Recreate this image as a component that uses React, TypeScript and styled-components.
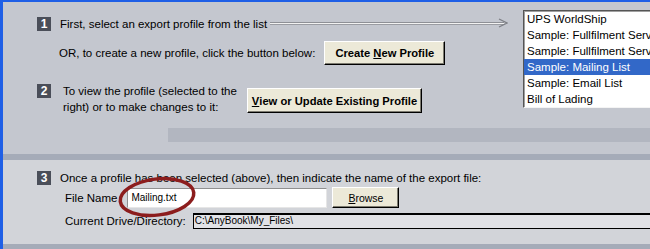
import React from "react";
import styled, { createGlobalStyle } from "styled-components";

const GlobalStyle = createGlobalStyle`
  html, body { margin: 0; padding: 0; background: #c4c7cf; }
  * { box-sizing: border-box; }
`;

const Frame = styled.div`
  width: 650px;
  height: 249px;
  display: flex;
  flex-direction: column;
  border-left: 3px solid #1f5fe6;
  border-top: 2px solid #1f5fe6;
  overflow: hidden;
  font-family: "Liberation Sans", Arial, sans-serif;
  font-size: 11.5px;
  color: #000;
`;

const TopPanel = styled.div`
  height: 152px;
  flex: none;
  display: flex;
  flex-direction: column;
  padding-top: 8px;
  background: #c4c7cf;
  overflow: hidden;
`;

const TopRow = styled.div`
  display: flex;
  align-items: flex-start;
`;

const LeftCol = styled.div`
  flex: 1;
  min-width: 0;
  display: flex;
  flex-direction: column;
  padding-left: 34px;
  padding-right: 15px;
`;

const Badge = styled.div`
  width: 14px;
  height: 14px;
  flex: none;
  background: #4a4e59;
  color: #fff;
  font-weight: bold;
  font-size: 12px;
  line-height: 14px;
  text-align: center;
`;

const StepRow = styled.div<{ $mt: number }>`
  display: flex;
  align-items: center;
  height: 14px;
  margin-top: ${(p) => p.$mt}px;
`;

const StepText = styled.span<{ $ml: number }>`
  margin-left: ${(p) => p.$ml}px;
  white-space: nowrap;
`;

const ArrowWrap = styled.div`
  flex: 1;
  display: flex;
  align-items: center;
  margin-left: 3px;
  margin-top: -2px;
`;

const ArrowLine = styled.div`
  flex: 1;
  height: 3px;
  border-top: 1px solid #8e9096;
  border-bottom: 1px solid #9a9ca2;
  background: #f2f2f2;
`;

const OrRow = styled.div`
  display: flex;
  align-items: center;
  gap: 9px;
  margin-top: 10px;
  padding-left: 22px;
  height: 24px;
`;

const WinButton = styled.div<{ $w: number; $h: number; $bold?: boolean }>`
  width: ${(p) => p.$w}px;
  height: ${(p) => p.$h}px;
  flex: none;
  display: flex;
  align-items: center;
  justify-content: center;
  background: #ece9d8;
  border: 1px solid;
  border-color: #ffffff #000000 #000000 #ffffff;
  box-shadow: inset -1px -1px 0 #7d7b70;
  font-weight: ${(p) => (p.$bold ? "bold" : "normal")};
  font-size: ${(p) => (p.$bold ? "11.2px" : "10.5px")};
  white-space: nowrap;
`;

const Step2Row = styled.div`
  display: flex;
  align-items: flex-start;
  margin-top: 19px;
`;

const Step2Text = styled.div`
  margin-left: 12px;
  margin-top: -1px;
  line-height: 16px;
  width: 172px;
  white-space: nowrap;
`;

const Step2Button = styled(WinButton)`
  margin-left: 12px;
  margin-top: 4px;
`;

const ListBox = styled.div`
  width: 150px;
  flex: none;
  margin-right: -23px;
  background: #fff;
  border-top: 1px solid #555;
  border-left: 1px solid #555;
  border-bottom: 1px solid #f4f4f4;
  box-shadow: inset 1px 1px 0 #a0a0a0;
  overflow: hidden;
`;

const ListItem = styled.div<{ $selected?: boolean }>`
  height: 16px;
  line-height: 16px;
  padding-left: 3px;
  white-space: nowrap;
  overflow: hidden;
  background: ${(p) => (p.$selected ? "#3268c8" : "transparent")};
  color: ${(p) => (p.$selected ? "#fff" : "#000")};
`;

const Bar = styled.div`
  margin-top: auto;
  margin-bottom: 12px;
  margin-left: 165px;
  height: 14px;
  background: #b2b6c0;
`;

const Strip = styled.div<{ $h: number }>`
  height: ${(p) => p.$h}px;
  flex: none;
  background: #a5abb8;
`;

const BottomPanel = styled.div`
  height: 84px;
  flex: none;
  background: #d2d4d9;
  padding: 11px 0 0 34px;
  display: flex;
  flex-direction: column;
`;

const FieldRow = styled.div<{ $mt: number; $h: number }>`
  position: relative;
  display: flex;
  align-items: center;
  margin-top: ${(p) => p.$mt}px;
  padding-left: 28px;
  height: ${(p) => p.$h}px;
`;

const Label = styled.span`
  white-space: nowrap;
`;

const TextBox = styled.div`
  width: 200px;
  height: 20px;
  margin-left: 10px;
  background: #fff;
  border: 1px solid;
  border-color: #8f8f8f #e6e6e6 #e6e6e6 #8f8f8f;
  font-size: 10px;
  padding: 3px 0 0 3px;
  line-height: 11px;
`;

const BrowseButton = styled(WinButton)`
  margin-left: 5px;
`;

const DirField = styled.div`
  flex: 1;
  height: 16px;
  margin-left: 7px;
  margin-right: -10px;
  background: #e1e2e6;
  border: 1px solid #000;
  border-top: 2px solid #000;
  font-size: 10px;
  line-height: 12px;
  padding-left: 1px;
  white-space: nowrap;
`;

const Ellipse = styled.svg`
  position: absolute;
  left: 78px;
  top: -12px;
  width: 84px;
  height: 44px;
  pointer-events: none;
  overflow: visible;
`;

const U = styled.span`
  text-decoration: underline;
`;

const items = [
  "UPS WorldShip",
  "Sample: Fullfilment Services",
  "Sample: Fullfilment Services",
  "Sample: Mailing List",
  "Sample: Email List",
  "Bill of Lading",
];

export default function App() {
  return (
    <>
      <GlobalStyle />
      <Frame>
        <TopPanel>
          <TopRow>
            <LeftCol>
              <StepRow $mt={7}>
                <Badge>1</Badge>
                <StepText $ml={9}>First, select an export profile from the list</StepText>
                <ArrowWrap>
                  <ArrowLine />
                  <svg width="10" height="10" viewBox="0 0 10 10" style={{ marginLeft: -6 }}>
                    <polyline points="1,1 9,5 1,9" fill="none" stroke="#7c7e84" strokeWidth="1.2" />
                  </svg>
                </ArrowWrap>
              </StepRow>
              <OrRow>
                <span>OR, to create a new profile, click the button below:</span>
                <WinButton $w={121} $h={24} $bold>
                  Create&nbsp;<U>N</U>ew Profile
                </WinButton>
              </OrRow>
              <Step2Row>
                <Badge>2</Badge>
                <Step2Text>
                  To view the profile (selected to the
                  <br />
                  right) or to make changes to it:
                </Step2Text>
                <Step2Button $w={175} $h={25} $bold>
                  <U>V</U>iew or Update Existing Profile
                </Step2Button>
              </Step2Row>
            </LeftCol>
            <ListBox>
              {items.map((it, i) => (
                <ListItem key={i} $selected={i === 3}>
                  {it}
                </ListItem>
              ))}
            </ListBox>
          </TopRow>
          <Bar />
        </TopPanel>
        <Strip $h={6} />
        <BottomPanel>
          <StepRow $mt={0}>
            <Badge>3</Badge>
            <StepText $ml={9}>
              Once a profile has been selected (above), then indicate the name of the export file:
            </StepText>
          </StepRow>
          <FieldRow $mt={2} $h={21}>
            <Label>File Name</Label>
            <TextBox>Mailing.txt</TextBox>
            <BrowseButton $w={67} $h={21}>
              <U>B</U>rowse
            </BrowseButton>
            <Ellipse viewBox="0 0 84 44">
              <ellipse
                cx="42"
                cy="22"
                rx="37"
                ry="18"
                fill="none"
                stroke="#8c1d1d"
                strokeWidth="3.5"
                transform="rotate(-7 42 22)"
              />
            </Ellipse>
          </FieldRow>
          <FieldRow $mt={5} $h={16}>
            <Label>Current Drive/Directory:</Label>
            <DirField>C:\AnyBook\My_Files\</DirField>
          </FieldRow>
        </BottomPanel>
        <Strip $h={5} />
      </Frame>
    </>
  );
}
